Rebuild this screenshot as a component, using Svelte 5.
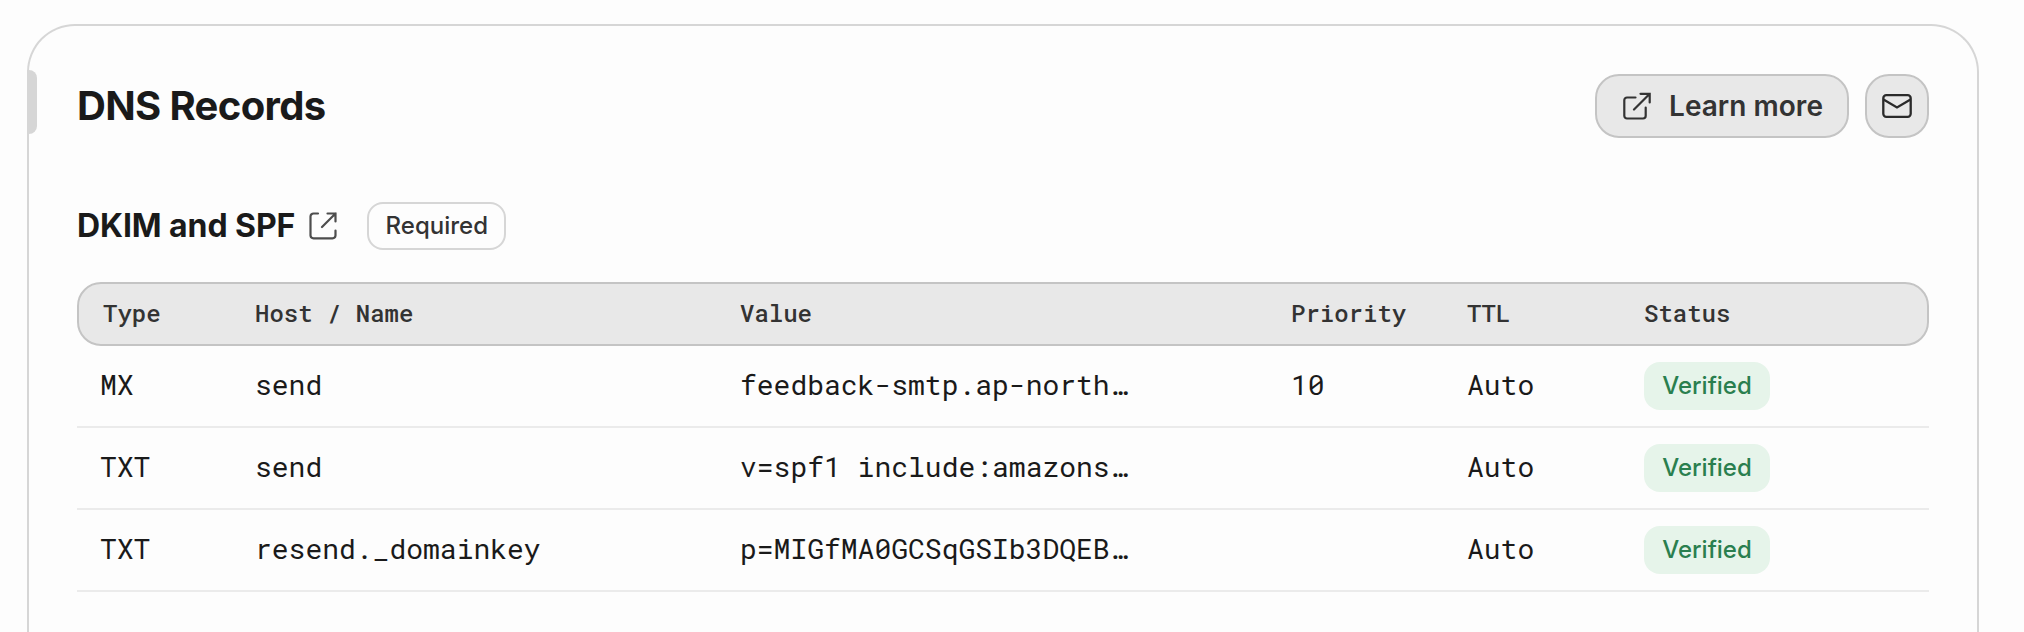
<script>
  const headers = ['Type', 'Host / Name', 'Value', 'Priority', 'TTL', 'Status'];
  const records = [
    { type: 'MX', host: 'send', value: 'feedback-smtp.ap-north…', priority: '10', ttl: 'Auto', status: 'Verified' },
    { type: 'TXT', host: 'send', value: 'v=spf1 include:amazons…', priority: '', ttl: 'Auto', status: 'Verified' },
    { type: 'TXT', host: 'resend._domainkey', value: 'p=MIGfMA0GCSqGSIb3DQEB…', priority: '', ttl: 'Auto', status: 'Verified' }
  ];
</script>

<main class="card">
  <span class="handle"></span>
  <header class="top">
    <h1>DNS Records</h1>
    <div class="actions">
      <button class="btn learn">
        <svg width="28" height="28" viewBox="0 0 28 28" fill="none" stroke="currentColor" stroke-width="2.200" stroke-linecap="round">
          <path d="M12.500 5.500H4A2.700 2.700 0 0 0 1.300 8.200V23.800A2.700 2.700 0 0 0 4 26.500H20A2.700 2.700 0 0 0 22.700 23.800V15.500M17.500 1.800H26.700V10.500M26.500 2L11 17.500" />
        </svg>
        <span>Learn more</span>
      </button>
      <button class="btn square" aria-label="Email">
        <svg width="30" height="24" viewBox="0 0 30 24" fill="none" stroke="currentColor" stroke-width="2.300">
          <rect x="1.300" y="1.200" width="27.400" height="21.600" rx="3" />
          <path d="M1.500 5.500L15 13.500L28.500 5.500" />
        </svg>
      </button>
    </div>
  </header>

  <section>
    <div class="title">
      <h2>DKIM and SPF</h2>
      <svg width="28" height="28" viewBox="0 0 28 28" fill="none" stroke="currentColor" stroke-width="2.200" stroke-linecap="round">
        <path d="M9 1.500H4.500A3 3 0 0 0 1.500 4.500V23.500A3 3 0 0 0 4.500 26.300H23.500A3 3 0 0 0 26.500 23.500V18.500M18.500 1.500H26.500V9.500M26.500 1.500L13 15" />
      </svg>
      <span class="badge outline">Required</span>
    </div>

    <div class="row head">
      {#each headers as h}<span>{h}</span>{/each}
    </div>
    {#each records as r}
      <div class="row body">
        <span class="mono">{r.type}</span>
        <span class="mono">{r.host}</span>
        <span class="mono">{r.value}</span>
        <span class="mono">{r.priority}</span>
        <span class="mono">{r.ttl}</span>
        <span class="badge ok">{r.status}</span>
      </div>
    {/each}
  </section>
</main>

<style>
  :global(html), :global(body) { overflow: hidden; }
  :global(body) { background: #fdfdfd; }
  .card {
    position: relative;
    box-sizing: border-box;
    width: 1952px;
    height: 608px;
    margin: 24px 0 0 27px;
    padding: 48px 48px 0;
    border: 2px solid #d6d6d6;
    border-bottom: 0;
    border-radius: 48px 48px 0 0;
    font-family: Inter, sans-serif;
    color: #1a1a1a;
  }
  .handle {
    position: absolute;
    left: -2px;
    top: 44px;
    width: 10px;
    height: 64px;
    border-radius: 0 8px 8px 0;
    background: #d6d6d6;
  }
  .top { display: flex; justify-content: space-between; align-items: center; height: 64px; }
  h1, h2 { margin: 0; font-weight: 700; }
  h1 { font-size: 40px; line-height: 48px; letter-spacing: -0.65px; }
  h2 { font-size: 32px; line-height: 40px; letter-spacing: -0.08px; }
  .actions { display: flex; gap: 16px; }
  .btn {
    box-sizing: border-box;
    display: flex;
    align-items: center;
    justify-content: center;
    height: 64px;
    padding: 0;
    border: 2px solid #c4c4c4;
    border-radius: 24px;
    background: #e8e8e8;
    color: #333;
    font: 600 28px/36px Inter, sans-serif;
    letter-spacing: 0.03px;
  }
  .learn { width: 254px; gap: 18px; padding-left: 2px; }
  .square { width: 64px; color: #2a2a2a; }
  section { margin-top: 64px; }
  .title { display: flex; align-items: center; height: 48px; margin-bottom: 32px; }
  .title svg { margin: 0 0 0 14px; color: #4d4d4d; }
  .badge {
    box-sizing: border-box;
    display: flex;
    align-items: center;
    justify-content: center;
    height: 48px;
    border-radius: 16px;
    font: 500 24px/32px Inter, sans-serif;
    letter-spacing: 0;
  }
  .outline { width: 139px; margin-left: 30px; border: 2px solid #d6d6d6; color: #333; }
  .ok { width: 126px; background: #e6f4ea; color: #2a7f4f; }
  .row {
    box-sizing: border-box;
    display: grid;
    align-items: center;
    font-family: 'Roboto Mono', 'DejaVu Sans Mono', monospace;
    white-space: nowrap;
  }
  .head {
    grid-template-columns: 152px 485px 551px 176px 177px 1fr;
    height: 64px;
    padding: 0 0 2px 24px;
    border: 2px solid #c4c4c4;
    border-radius: 24px;
    background: #e8e8e8;
    color: #333;
    font-size: 24px;
    font-weight: 550;
  }
  .body {
    grid-template-columns: 155px 485px 551px 176px 177px 1fr;
    height: 82px;
    padding-left: 23px;
    border-bottom: 2px solid #ebebeb;
    font-size: 28px;
  }
  .mono { padding-bottom: 3px; }
</style>
